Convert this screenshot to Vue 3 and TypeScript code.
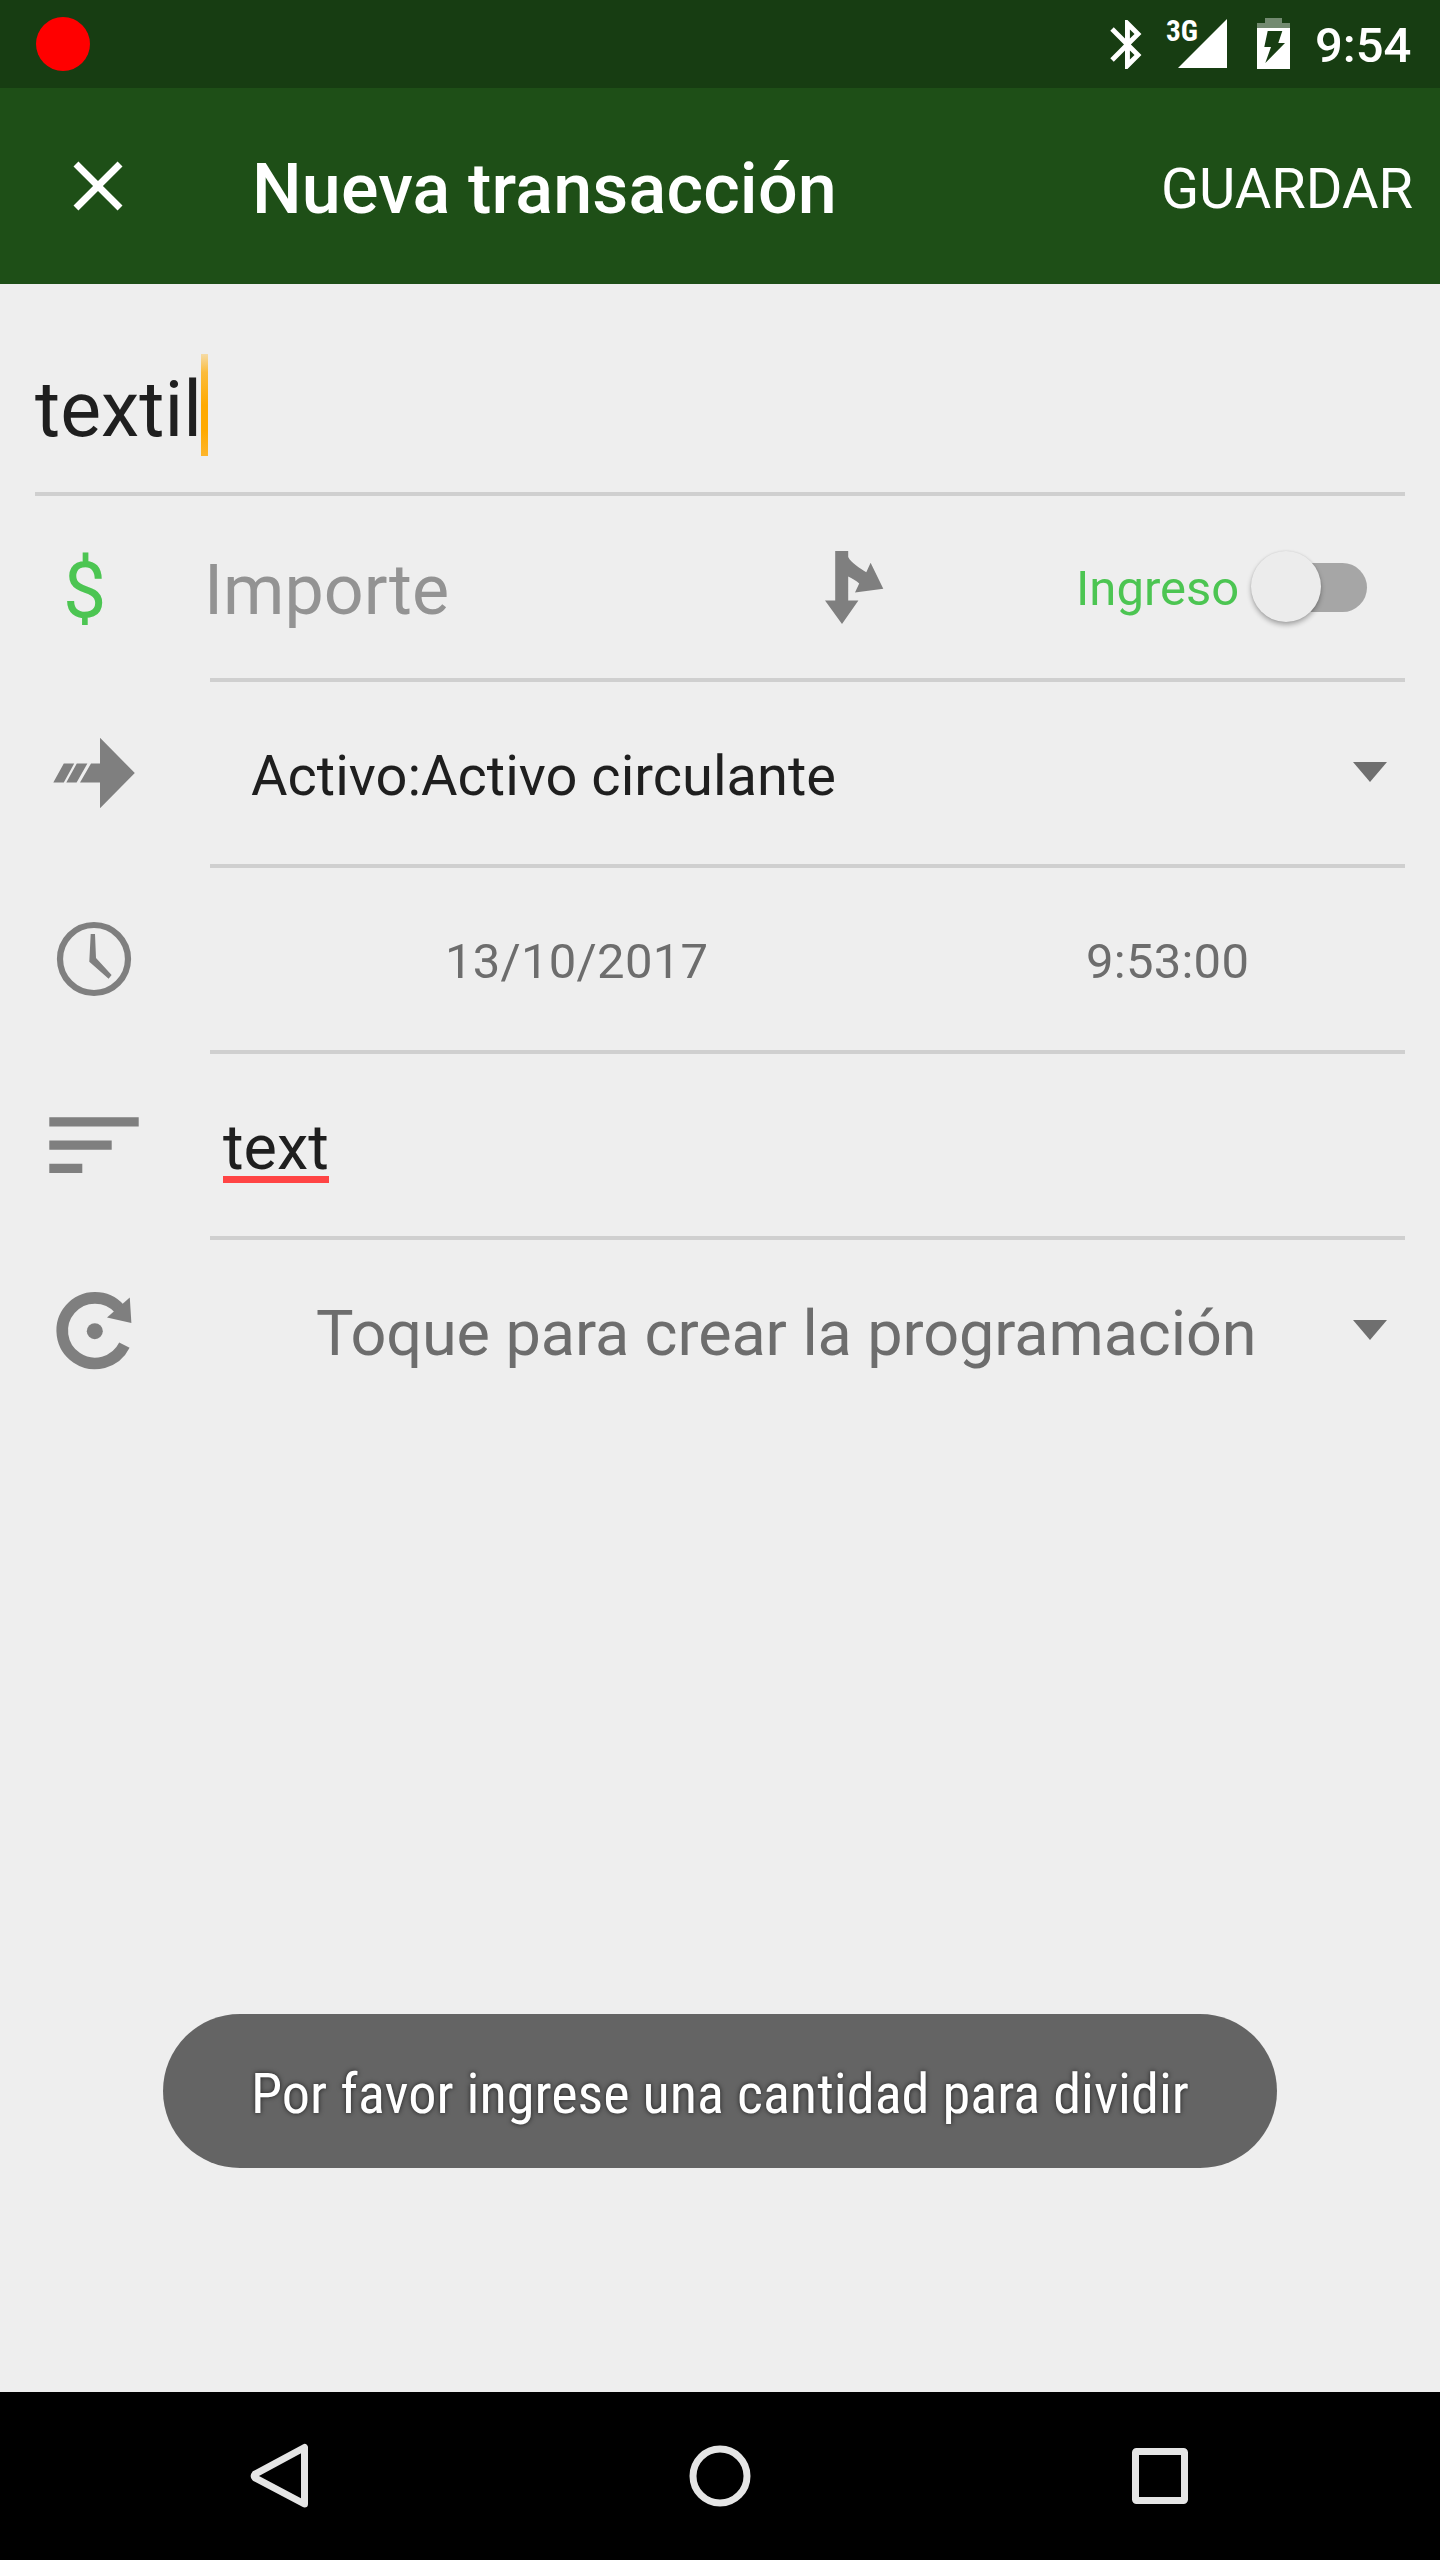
<script setup lang="ts">
import { ref } from 'vue'

const title = 'Nueva transacción'
const description = ref('textil')
const notes = ref('text')
const account = 'Activo:Activo circulante'
const date = '13/10/2017'
const time = '9:53:00'
const schedule = 'Toque para crear la programación'
const toast = 'Por favor ingrese una cantidad para dividir'
</script>

<template>
  <div class="screen">
    <header class="status">
      <span class="rec"></span>
      <svg class="status-icons" width="211" height="88" viewBox="1100 0 211 88">
        <path
          transform="translate(1098.05 15.1) scale(2.45)"
          fill="#fff"
          d="M17.71 7.71L12 2h-1v7.59L6.41 5 5 6.41 10.59 12 5 17.59 6.41 19 11 14.41V22h1l5.71-5.71-4.3-4.29 4.3-4.29zM13 5.83l1.88 1.88L13 9.59V5.83zm1.88 10.46L13 18.17v-3.76l1.88 1.88z"
        />
        <text x="1166" y="41.3" class="net" textLength="32" lengthAdjust="spacingAndGlyphs">3G</text>
        <path d="M1227 19V68H1178z" fill="#fff" />
        <path d="M1265 18h17v5h8v5h-33v-5h8z" fill="#fff" fill-opacity=".4" />
        <path d="M1257 28h33v41h-33z" fill="#fff" />
        <path d="M1267.7 31h14.6l-4 12h6.7l-19.7 20 5.7-16h-6.7z" fill="#173d12" />
      </svg>
      <span class="clock">9:54</span>
    </header>

    <nav class="appbar">
      <svg class="close" width="84" height="84" viewBox="0 0 24 24">
        <path fill="#fff" d="M19 6.41L17.59 5 12 10.59 6.41 5 5 6.41 10.59 12 5 17.59 6.41 19 12 13.41 17.59 19 19 17.59 13.41 12z" />
      </svg>
      <h1 class="title">{{ title }}</h1>
      <span class="save">GUARDAR</span>
    </nav>

    <main class="form">
      <div class="name-row">
        <span class="name">{{ description }}</span><span class="caret"></span>
      </div>

      <div class="row">
        <div class="lead"><span class="currency">$</span></div>
        <div class="body">
          <span class="amount">Importe</span>
          <svg class="split" width="60" height="75" viewBox="824 549.5 60 75">
            <path
              fill="#7f7f7f"
              d="M835.2 550.5H848.2V556.5C851 562.5 860 567.5 866.3 571.8L870.6 562.3 883.3 588.3 855 592 859.2 583C856.5 580.5 852 577.5 848.2 576V600H858.4L842 623.5 825 600H835.2z"
            />
          </svg>
          <span class="kind">Ingreso</span>
          <span class="switch"><span class="thumb"></span></span>
        </div>
      </div>

      <div class="row">
        <div class="lead">
          <svg width="210" height="182" viewBox="0 682 210 182" fill="#7f7f7f">
            <path d="M53.3 782.4L63.8 763.6H74.2L63.8 782.4zM66.3 782.4L76.8 763.6H87.4L76.6 782.4zM80 782.4L91 763.6H100V737.8L134.8 773 100 808.3V782.4z" />
          </svg>
        </div>
        <div class="body">
          <span class="account">{{ account }}</span>
          <span class="drop"></span>
        </div>
      </div>

      <div class="row">
        <div class="lead">
          <svg width="210" height="182" viewBox="0 868 210 182" fill="#7f7f7f">
            <circle cx="94" cy="959" r="34" fill="none" stroke="#7f7f7f" stroke-width="6.2" />
            <path d="M90.7 934H95L96 958 111.6 975 108.6 978.7 89.3 961.7z" />
          </svg>
        </div>
        <div class="body">
          <span class="date">{{ date }}</span>
          <span class="time">{{ time }}</span>
        </div>
      </div>

      <div class="row">
        <div class="lead">
          <svg width="210" height="182" viewBox="0 1054 210 182" fill="#7f7f7f">
            <path d="M49.3 1117.2h89.4v9.3H49.3zM49.3 1140.4h62.4v9.3H49.3zM49.3 1163.7h33v9.3h-33z" />
          </svg>
        </div>
        <div class="body">
          <span class="notes">{{ notes }}</span>
        </div>
      </div>

      <div class="row last">
        <div class="lead">
          <svg width="210" height="182" viewBox="0 1240 210 182" fill="#7f7f7f">
            <path d="M124.4 1345.2A32.8 32.8 0 1 1 119.5 1308.8" fill="none" stroke="#7f7f7f" stroke-width="11.6" />
            <path d="M129.8 1297.6L131.4 1323 107 1317.4z" />
            <circle cx="94.8" cy="1331.2" r="8" />
          </svg>
        </div>
        <div class="body">
          <span class="schedule">{{ schedule }}</span>
          <span class="drop"></span>
        </div>
      </div>
    </main>

    <div class="toast">
      <svg width="940" height="80" viewBox="0 0 940 80">
        <text x="1" y="62" class="toast-text" textLength="938" lengthAdjust="spacingAndGlyphs">{{ toast }}</text>
      </svg>
    </div>

    <footer class="navbar">
      <svg width="60" height="70" viewBox="250 2441 60 70" fill="none" stroke="#e5e5e5" stroke-width="7" stroke-linejoin="round">
        <path d="M304.5 2447.5V2504L255 2477.8Q253.5 2476 255 2474.2z" />
      </svg>
      <svg width="64" height="70" viewBox="688.5 2441 64 70" fill="none" stroke="#e5e5e5" stroke-width="7">
        <circle cx="720.5" cy="2476" r="27" />
      </svg>
      <svg width="60" height="70" viewBox="1130 2441 60 70" fill="none" stroke="#e5e5e5" stroke-width="7">
        <rect x="1135.5" y="2451.5" width="49" height="49" rx="1" />
      </svg>
    </footer>
  </div>
</template>

<style>
body {
  margin: 0;
  background: #eeeeee;
}
</style>

<style scoped>
.screen {
  width: 1440px;
  height: 2560px;
  display: flex;
  flex-direction: column;
  background: #eeeeee;
  color: #1f1f1f;
  font-family: Roboto, sans-serif;
  overflow: hidden;
  white-space: nowrap;
}
.status {
  flex: none;
  height: 88px;
  display: flex;
  align-items: center;
  background: #173d12;
  color: #fff;
}
.rec {
  width: 54px;
  height: 54px;
  margin-left: 36px;
  border-radius: 50%;
  background: #f00;
}
.status-icons {
  margin-left: auto;
}
.net {
  font-family: 'Roboto Condensed', Roboto, sans-serif;
  font-size: 29px;
  font-weight: 700;
  fill: #fff;
}
.clock {
  width: 125px;
  margin-left: 4px;
  padding-top: 4px;
  font-size: 49px;
  line-height: 60px;
  font-weight: 500;
}
.appbar {
  flex: none;
  height: 196px;
  display: flex;
  align-items: center;
  background: #1e4f17;
  color: #fff;
}
.close {
  margin-left: 56px;
}
.title {
  margin: 0 0 0 112px;
  padding-top: 6px;
  font-size: 70px;
  line-height: 84px;
  font-weight: 500;
  letter-spacing: 0.18px;
}
.save {
  margin-left: auto;
  margin-right: 27px;
  padding-top: 6px;
  font-size: 56px;
  line-height: 66px;
}
.form {
  flex: 1;
}
.name-row {
  height: 208px;
  margin: 0 35px;
  box-sizing: content-box;
  border-bottom: 4px solid #cfcfcf;
  display: flex;
  align-items: flex-start;
}
.name {
  width: 166px;
  margin-top: 81px;
  font-size: 77px;
  line-height: 90px;
}
.caret {
  width: 7px;
  height: 102px;
  margin-top: 70px;
  background: linear-gradient(#f5dba6, #fbbc3c 18%, #ffaa00 50%, #ffaa00 75%, #fdb52c);
}
.row {
  height: 186px;
  display: flex;
}
.lead {
  width: 210px;
  height: 182px;
  flex: none;
  display: flex;
  align-items: center;
}
.currency {
  margin-left: 63px;
  padding-top: 7px;
  font-size: 77px;
  line-height: 90px;
  color: #4cc552;
}
.body {
  width: 1195px;
  height: 182px;
  border-bottom: 4px solid #cfcfcf;
  display: flex;
  align-items: center;
}
.last .body {
  border-bottom-color: transparent;
}
.amount {
  width: 620px;
  margin-left: -6px;
  padding-top: 6px;
  font-size: 70px;
  line-height: 84px;
  color: #939393;
}
.split {
  flex: none;
}
.kind {
  width: 175px;
  margin-left: 192px;
  padding-top: 3px;
  font-size: 49px;
  line-height: 58px;
  color: #4cc552;
}
.switch {
  width: 116px;
  height: 49px;
  margin-top: 1px;
  border-radius: 25px;
  background: linear-gradient(90deg, transparent 45px, #a6a6a6 45px);
  display: flex;
  align-items: center;
}
.thumb {
  width: 70px;
  height: 71px;
  flex: none;
  margin-top: -2px;
  border-radius: 50%;
  background: #ececec;
  box-shadow: 0 3px 5px rgba(0, 0, 0, 0.3), 0 0 2px rgba(0, 0, 0, 0.1);
}
.account {
  margin-left: 41px;
  padding-top: 6px;
  font-size: 56px;
  line-height: 66px;
}
.drop {
  margin: -2px 18px 0 auto;
  border: solid transparent;
  border-width: 20px 17.5px 0;
  border-top-color: #6f6f6f;
}
.date,
.time {
  padding-top: 5px;
  font-size: 49px;
  line-height: 58px;
  letter-spacing: 0.25px;
  color: #6d6d6d;
}
.date {
  width: 641px;
  margin-left: 235px;
}
.notes {
  height: 74px;
  margin: 6px 0 0 13px;
  font-size: 63px;
  line-height: 74px;
  background: linear-gradient(#ff4444, #ff4444) 0 65px / 100% 7px no-repeat;
}
.schedule {
  margin-left: 106px;
  padding-top: 5px;
  font-size: 63px;
  line-height: 74px;
  letter-spacing: -0.1px;
  color: #6d6d6d;
}
.toast {
  flex: none;
  width: 1114px;
  height: 154px;
  margin: 0 auto 224px;
  border-radius: 77px;
  background: #646464;
  display: flex;
  align-items: center;
  justify-content: center;
}
.toast-text {
  font-family: 'Roboto Condensed', Roboto, sans-serif;
  font-size: 56px;
  fill: #fff;
  text-shadow: 0 0 5px rgba(0, 0, 0, 0.7);
}
.navbar {
  flex: none;
  height: 168px;
  padding: 0 250px;
  display: flex;
  align-items: center;
  justify-content: space-between;
  background: #000;
}
</style>
